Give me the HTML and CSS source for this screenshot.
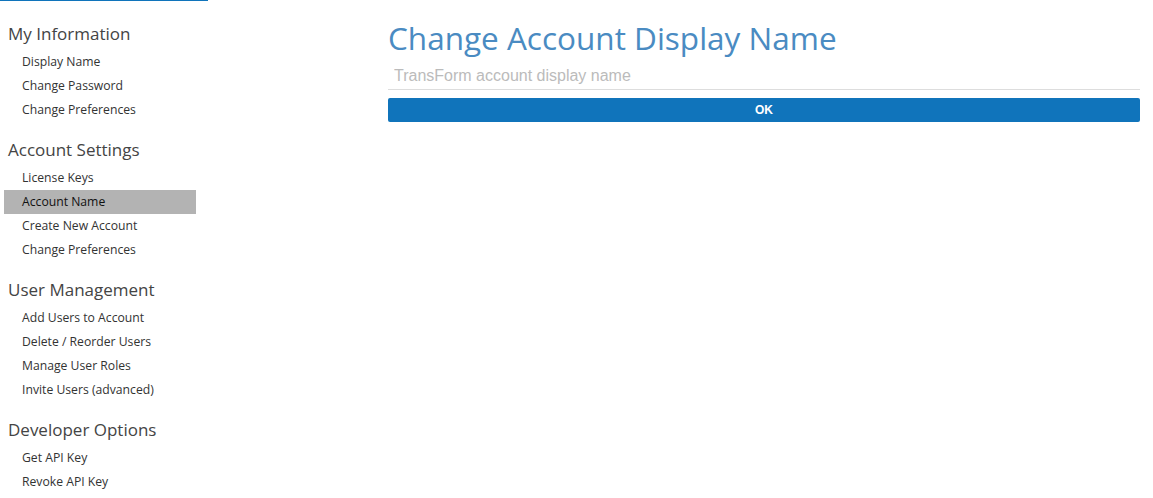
FILE: index.html
```html
<!DOCTYPE html>
<html>
<head>
<meta charset="utf-8">
<link rel="stylesheet" href="styles.css">
</head>
<body>
<div class="topline"></div>
<div class="layout">
  <nav class="sidebar">
    <div class="section">
      <h3 class="sec-title">My Information</h3>
      <a class="item">Display Name</a>
      <a class="item">Change Password</a>
      <a class="item">Change Preferences</a>
    </div>
    <div class="section">
      <h3 class="sec-title">Account Settings</h3>
      <a class="item">License Keys</a>
      <a class="item active">Account Name</a>
      <a class="item">Create New Account</a>
      <a class="item">Change Preferences</a>
    </div>
    <div class="section">
      <h3 class="sec-title">User Management</h3>
      <a class="item">Add Users to Account</a>
      <a class="item">Delete / Reorder Users</a>
      <a class="item">Manage User Roles</a>
      <a class="item">Invite Users (advanced)</a>
    </div>
    <div class="section">
      <h3 class="sec-title">Developer Options</h3>
      <a class="item">Get API Key</a>
      <a class="item">Revoke API Key</a>
    </div>
  </nav>
  <main class="main">
    <h1 class="title">Change Account Display Name</h1>
    <input class="name-input" type="text" placeholder="TransForm account display name">
    <button class="ok-btn">OK</button>
  </main>
</div>
</body>
</html>
```

FILE: styles.css
```css
html, body {
  margin: 0;
  padding: 0;
  background: #fff;
}
body {
  font-family: "Open Sans", "Noto Sans", sans-serif;
}
.topline {
  width: 208px;
  height: 1px;
  background: #1074bb;
}
.layout {
  display: flex;
  align-items: flex-start;
}
.sidebar {
  width: 192px;
  margin-left: 4px;
  padding-top: 21px;
  display: flex;
  flex-direction: column;
  gap: 16px;
}
.section {
  display: flex;
  flex-direction: column;
}
.sec-title {
  margin: 0;
  padding-left: 4px;
  font-size: 17px;
  font-weight: normal;
  color: #444;
  line-height: 24px;
  height: 28px;
  box-sizing: border-box;
}
.item {
  display: block;
  height: 24px;
  line-height: 24px;
  padding-left: 18px;
  font-size: 12.2px;
  color: #333;
  text-decoration: none;
}
.item.active {
  background: #b3b3b3;
  color: #111;
}
.main {
  margin-left: 192px;
  width: 752px;
  padding-top: 15px;
  display: flex;
  flex-direction: column;
}
.title {
  margin: 0;
  font-size: 31.5px;
  font-weight: normal;
  color: #4a8bc2;
  line-height: 44px;
}
.name-input {
  border: 0;
  border-bottom: 1px solid #ddd;
  outline: none;
  height: 30px;
  padding: 2px 6px 0;
  font-family: "Liberation Sans", Arial, sans-serif;
  font-size: 16px;
  color: #333;
  box-sizing: border-box;
  margin-top: 0;
}
.name-input::placeholder {
  color: #bbb;
}
.ok-btn {
  margin-top: 8px;
  height: 24px;
  border: 0;
  border-radius: 2px;
  background: #1074bb;
  color: #fff;
  font-family: "Liberation Sans", Arial, sans-serif;
  font-weight: bold;
  font-size: 12px;
  padding: 0;
}
```
